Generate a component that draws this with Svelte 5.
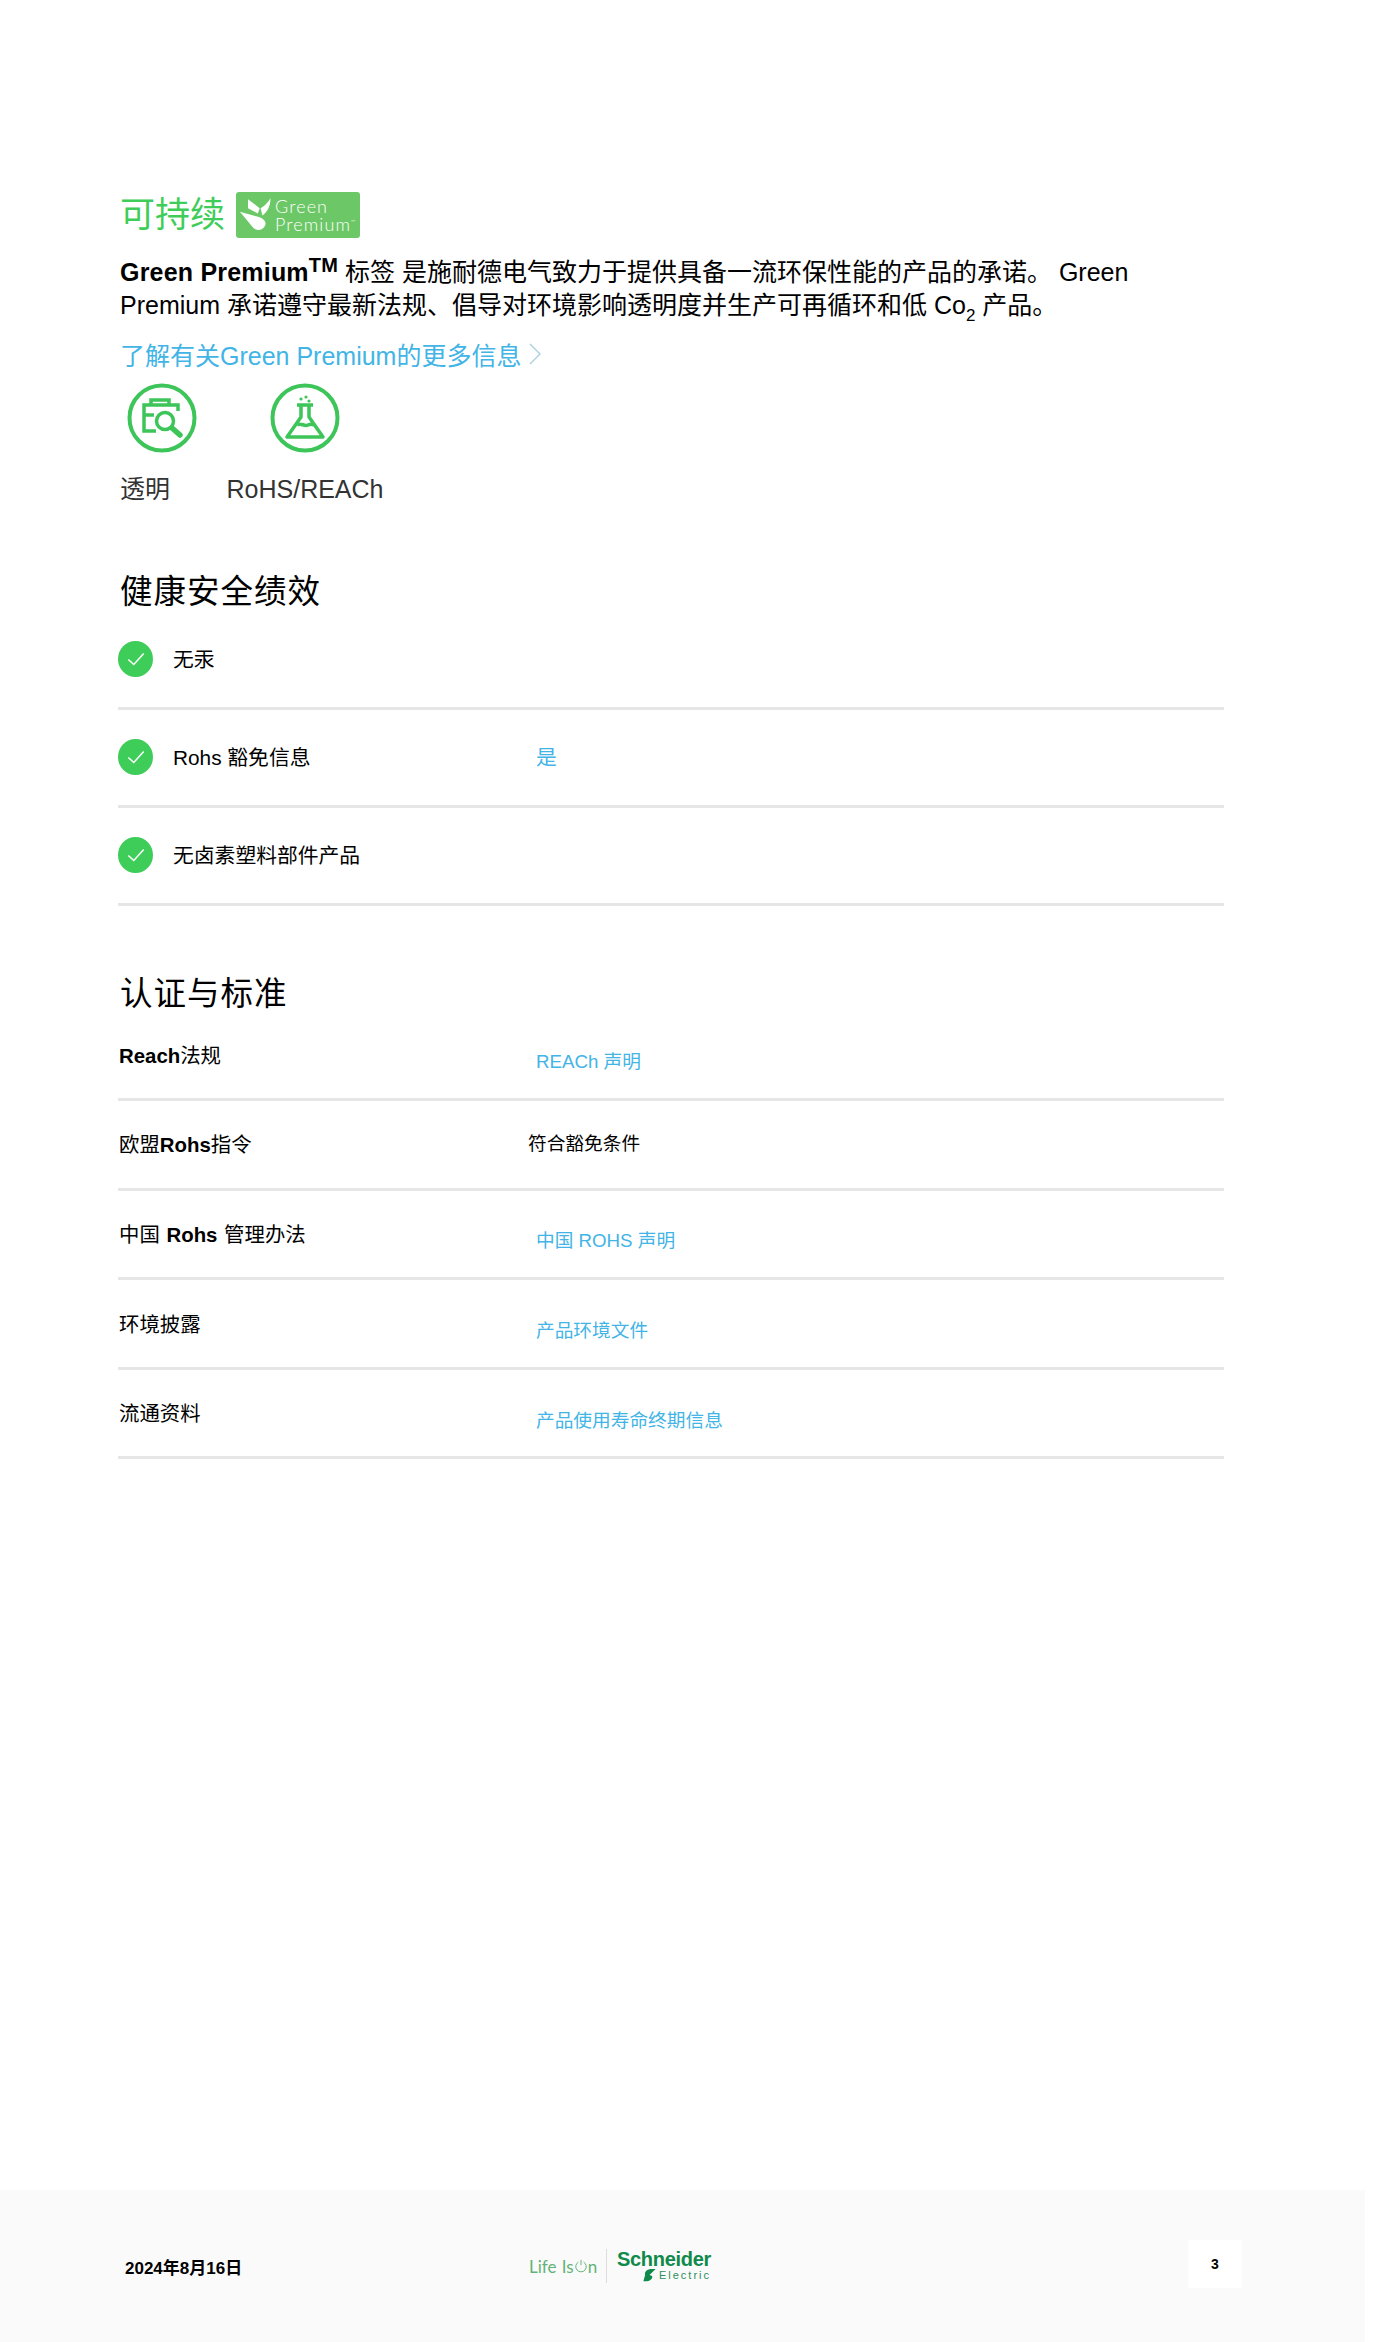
<script>
  const health = [
    { label: '无汞', value: '' },
    { label: 'Rohs 豁免信息', value: '是' },
    { label: '无卤素塑料部件产品', value: '' }
  ];
  const certs = [
    { html: 'reach', value: 'REACh 声明', link: true },
    { html: 'eu', value: '符合豁免条件', link: false },
    { html: 'cn', value: '中国 ROHS 声明', link: true },
    { html: 'env', value: '产品环境文件', link: true },
    { html: 'cir', value: '产品使用寿命终期信息', link: true }
  ];
</script>

<div class="page">
  <main class="main">
    <div class="title-row">
      <h2 class="green-title">可持续</h2>
      <div class="badge">
        <svg class="leaf" viewBox="0 0 40 36" width="36" height="35" aria-hidden="true">
          <path d="M10 1 L23 11 L21 17 L10 11 Z" fill="#fff"/>
          <path d="M35 0 C35 8 32 15 26 19 L24 11 C28 9 32 5 35 0 Z" fill="#fff"/>
          <path d="M1 15 L19 20 C28 22 32 27 28 32 C25 36 20 36 16 33 Z" fill="#fff"/>
        </svg>
        <div class="badge-text"><span>Green</span><span>Premium<sup>™</sup></span></div>
      </div>
    </div>

    <p class="intro"><b>Green Premium<sup class="tm">TM</sup></b> 标签 是施耐德电气致力于提供具备一流环保性能的产品的承诺。 Green<br/>Premium 承诺遵守最新法规、倡导对环境影响透明度并生产可再循环和低 Co<sub class="sub">2</sub> 产品。</p>

    <a class="more" href="#more">了解有关Green Premium的更多信息
      <svg class="chev" viewBox="0 0 12 22" width="12" height="22" aria-hidden="true"><path d="M1 1 L11 11 L1 21" fill="none" stroke="#a9cfe0" stroke-width="1.4"/></svg>
    </a>

    <div class="icons">
      <div class="icon-item first">
        <svg viewBox="0 0 70 70" width="70" height="70" aria-hidden="true" fill="none" stroke="#3dc55a" stroke-width="3.5">
          <circle cx="35" cy="35" r="32.5" stroke-width="4"/>
          <path d="M29 48 H17 V22 H51 V28"/>
          <path d="M24 21 V17 H42 V21"/>
          <path d="M17 32 H27"/>
          <circle cx="38" cy="38" r="8.5"/>
          <path d="M45 45 L53 52" stroke-width="5.5" stroke-linecap="round"/>
        </svg>
        <span class="icon-label">透明</span>
      </div>
      <div class="icon-item">
        <svg viewBox="0 0 70 70" width="70" height="70" aria-hidden="true" fill="none" stroke="#3dc55a" stroke-width="3.5">
          <circle cx="35" cy="35" r="32.5" stroke-width="4"/>
          <path d="M27 22 H43 M31 22 V34 L17 54 H53 L39 34 V22" stroke-linejoin="round"/>
          <path d="M27 42 C31 39 34 44 38 42 C40 41 42 41 44 42"/>
          <circle cx="31" cy="16" r="1.6" fill="#3dc55a" stroke="none"/>
          <circle cx="36" cy="14" r="1.6" fill="#3dc55a" stroke="none"/>
          <circle cx="39" cy="18" r="1.6" fill="#3dc55a" stroke="none"/>
        </svg>
        <span class="icon-label">RoHS/REACh</span>
      </div>
    </div>

    <h2 class="heading h-health">健康安全绩效</h2>
    <ul class="list">
      {#each health as row}
        <li class="health-row">
          <span class="check">
            <svg viewBox="0 0 20 20" width="22" height="22" aria-hidden="true"><path d="M3 10.5 L8 15 L17 5" fill="none" stroke="#fff" stroke-width="1.4"/></svg>
          </span>
          <span class="health-label">{row.label}</span>
          {#if row.value}<a class="link" href="#v">{row.value}</a>{/if}
        </li>
      {/each}
    </ul>

    <h2 class="heading h-cert">认证与标准</h2>
    <ul class="list">
      {#each certs as row}
        <li class="cert-row">
          <span class="cert-label">
            {#if row.html === 'reach'}<b>Reach</b>法规
            {:else if row.html === 'eu'}欧盟<b>Rohs</b>指令
            {:else if row.html === 'cn'}<span class="wide">中国 <b>Rohs</b> 管理办法</span>
            {:else if row.html === 'env'}环境披露
            {:else}流通资料{/if}
          </span>
          {#if row.link}
            <a class="cert-value link" href="#c">{row.value}</a>
          {:else}
            <span class="cert-plain">{row.value}</span>
          {/if}
        </li>
      {/each}
    </ul>
  </main>

  <footer class="footer">
    <span class="date">2024年8月16日</span>
    <div class="brand">
      <span class="lio">Life Is <svg viewBox="0 0 16 16" width="14" height="14" aria-hidden="true"><path d="M5 3.5 A6 6 0 1 0 11 3.5 M8 1 V7" fill="none" stroke="#62b377" stroke-width="1.1"/></svg>n</span>
      <span class="rule"></span>
      <div class="se">
        <span class="se-top">Schneider</span>
        <span class="se-bottom">
          <svg viewBox="0 0 16 16" width="15" height="14" aria-hidden="true"><path d="M11 1 C5 1 2 4 3 8 L1 15 C7 16 12 13 11 9 L8 8 L15 1 Z" fill="#0f8a4a"/></svg>
          <span>Electric</span>
        </span>
      </div>
    </div>
    <span class="pageno">3</span>
  </footer>
</div>

<style>
  :global(body) { margin: 0; background: #fff; }
  .page {
    width: 1395px;
    height: 2342px;
    display: flex;
    flex-direction: column;
    font-family: "Liberation Sans", "Noto Sans CJK SC", sans-serif;
    color: #000;
    overflow: hidden;
  }
  .main { flex: 1; padding: 191px 171px 0 120px; box-sizing: border-box; }
  .title-row { display: flex; align-items: center; gap: 11px; height: 47px; }
  .green-title { margin: 0; font-size: 35px; font-weight: 400; color: #3dcd58; line-height: 47px; white-space: nowrap; }
  .badge {
    width: 124px; height: 46px; background: #6cc766; border-radius: 3px;
    display: flex; align-items: center; gap: 0; padding-left: 3px; box-sizing: border-box;
  }
  .leaf { flex: none; }
  .badge-text {
    display: flex; flex-direction: column; color: #fff; font-family: Lato, sans-serif;
    font-weight: 300; font-size: 18px; line-height: 18px; letter-spacing: 1.1px;
  }
  .badge-text sup { font-size: 6px; line-height: 0; }
  .intro { margin: 18px 0 0; font-size: 25px; line-height: 33px; white-space: nowrap; height: 66px; }
  .intro b { font-weight: 700; letter-spacing: 0.2px; }
  .tm { font-size: 20px; line-height: 0; vertical-align: 9px; }
  .sub { font-size: 17px; line-height: 0; vertical-align: -7px; }
  .more {
    display: flex; align-items: center; gap: 8px; margin-top: 15px; height: 34px;
    font-size: 25px; color: #42b4e6; text-decoration: none; white-space: nowrap;
  }
  .chev { flex: none; }
  .icons { display: flex; margin-top: 12px; height: 122px; }
  .icon-item { display: flex; flex-direction: column; align-items: center; gap: 21px; width: 156px; }
  .icon-item svg { flex: none; }
  .icon-item.first { width: 83px; margin-right: 24px; align-items: flex-start; }
  .icon-item.first svg { margin-left: 7px; }
  .icon-label { font-size: 25px; line-height: 30px; color: #333; white-space: nowrap; }
  .heading { margin: 0; font-size: 32.5px; font-weight: 400; line-height: 44px; letter-spacing: 1px; }
  .h-health { margin-top: 65px; }
  .h-cert { margin-top: 66px; }
  .list { list-style: none; margin: 0 0 0 -2px; padding: 0; }
  .h-health + .list { margin-top: -2.5px; }
  .h-cert + .list { margin-top: -4px; }
  .health-row {
    display: flex; align-items: center; height: 98px; border-bottom: 3px solid #e6e6e6; box-sizing: border-box;
    font-size: 20.8px;
  }
  .check {
    width: 35px; height: 36px; border-radius: 50%; background: #3dcd58; flex: none;
    display: flex; align-items: center; justify-content: center;
  }
  .health-label { margin-left: 20px; width: 363px; white-space: nowrap; margin-top: -2px; }
  .health-row .link { margin-top: -2px; }
  .link { color: #42b4e6; text-decoration: none; white-space: nowrap; }
  .cert-row {
    display: flex; align-items: center; height: 89.6px; border-bottom: 3px solid #e6e6e6; box-sizing: border-box;
    font-size: 18.7px; padding-left: 2px;
  }
  .cert-label { width: 416px; flex: none; white-space: nowrap; font-size: 20.4px; margin-top: -2px; margin-left: -1px; margin-right: 1px; }
  .cert-label b { font-weight: 700; }
  .wide { word-spacing: 1px; }
  .cert-value { margin-top: 10px; }
  .cert-plain { margin-left: -8px; margin-top: -6px; white-space: nowrap; }
  .footer {
    width: 1365px; height: 152px; flex: none; background: #fafafa;
    display: flex; align-items: center; position: relative; box-sizing: border-box; padding-left: 125px;
  }
  .date { font-size: 17px; font-weight: 700; width: 404px; white-space: nowrap; }
  .brand { display: flex; align-items: center; }
  .lio { font-size: 17px; color: #62b377; font-family: Lato, sans-serif; font-weight: 400; width: 77px; white-space: nowrap; display: flex; align-items: center; gap: 0; word-spacing: 1px; }
  .rule { width: 1px; height: 34px; background: #ddd; margin-right: 10px; }
  .se { display: flex; flex-direction: column; width: 94px; color: #0f8a4a; }
  .se-top { font-size: 20px; font-weight: 700; line-height: 18px; letter-spacing: -0.3px; }
  .se-bottom { display: flex; align-items: center; justify-content: flex-end; gap: 2px; font-size: 11px; letter-spacing: 2px; line-height: 10px; font-weight: 400; color: #2b8f5a; }
  .pageno {
    position: absolute; left: 1188px; top: 50px; width: 54px; height: 48px; background: #fff;
    display: flex; align-items: center; justify-content: center; font-size: 14px; font-weight: 700;
  }
</style>
